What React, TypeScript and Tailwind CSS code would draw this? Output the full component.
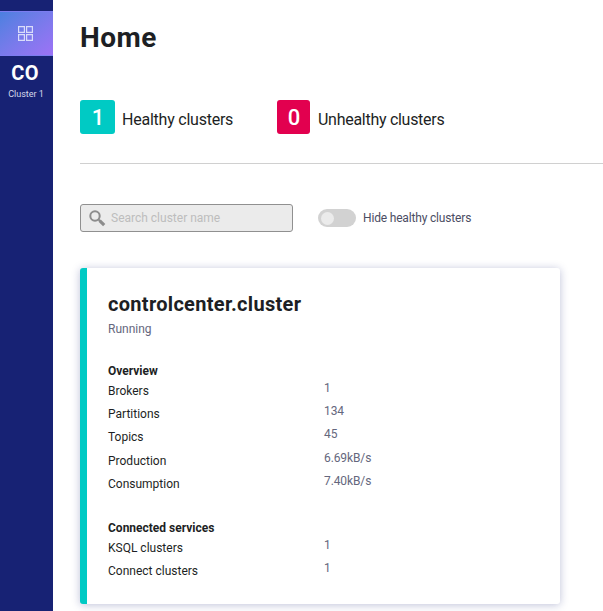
type Metric = { label: string; value: string };

const overview: Metric[] = [
  { label: "Brokers", value: "1" },
  { label: "Partitions", value: "134" },
  { label: "Topics", value: "45" },
  { label: "Production", value: "6.69kB/s" },
  { label: "Consumption", value: "7.40kB/s" },
];

const services: Metric[] = [
  { label: "KSQL clusters", value: "1" },
  { label: "Connect clusters", value: "1" },
];

function Sidebar() {
  return (
    <nav className="flex w-[53px] shrink-0 flex-col items-center bg-[#172274] pt-[11px]">
      <a className="flex h-[45px] w-full items-center justify-center border-y border-[#7b7cf0] bg-linear-to-br from-[#4a80e0] to-[#9c72f6] pr-[2px]">
        <svg width="15" height="15" viewBox="0 0 15 15" fill="none" stroke="#d9dcfa" strokeWidth="1.2" className="-mt-px">
          <path d="M.6.6h5.8v5.8H.6zM8.6 .6h5.8v5.8H8.6zM.6 8.6h5.8v5.8H.6zM8.6 8.6h5.8v5.8H8.6z" />
        </svg>
      </a>
      <span className="mt-[5px] pr-[3px] text-[20px] leading-6 font-bold tracking-[0.2px] text-white">CO</span>
      <span className="mt-[3px] pr-px text-[9px] leading-3 whitespace-nowrap text-[#d5d8ea]">Cluster 1</span>
    </nav>
  );
}

function MetricRows({ title, rows }: { title: string; rows: Metric[] }) {
  return (
    <section>
      <h3 className="h-[17.75px] text-[12px] leading-[18px] font-bold">{title}</h3>
      {rows.map((row) => (
        <div key={row.label} className="flex h-[23.25px] items-start text-[12px] leading-[22px]">
          <span className="w-[216px]">{row.label}</span>
          <span className="-mt-[3px] tracking-[-0.1px] text-[#65677d]">{row.value}</span>
        </div>
      ))}
    </section>
  );
}

export default function App() {
  return (
    <div className="flex h-[611px] w-[603px] overflow-hidden bg-white font-['Roboto',sans-serif] text-[#1d1f24]">
      <Sidebar />
      <main className="flex-1 pl-[27px]">
        <h1 className="pt-[21px] text-[28px] leading-[34px] font-bold tracking-[0.5px]">Home</h1>
        <div className="mt-[45px] flex h-[64px] items-start border-b border-[#d0d0d0]">
          <div className="flex w-[197px] items-center">
            <span className="flex h-[34px] w-[35px] items-center justify-center rounded-[3px] bg-[#00cac4] pl-px text-[22px] font-medium text-white">1</span>
            <span className="mt-[5px] ml-[7px] text-[16px] leading-5 tracking-[-0.23px]">Healthy clusters</span>
          </div>
          <div className="flex items-center">
            <span className="flex h-[34px] w-[33px] items-center justify-center rounded-[3px] bg-[#e2004f] pl-px text-[22px] font-medium text-white">0</span>
            <span className="mt-[5px] ml-[8px] text-[16px] leading-5 tracking-[-0.28px]">Unhealthy clusters</span>
          </div>
        </div>
        <div className="mt-10 flex h-7 items-center">
          <label className="flex h-7 w-[213px] items-center rounded-[3px] border border-[#909090] bg-[#ebebeb] pl-2">
            <svg width="17" height="17" viewBox="0 0 17 17" fill="none" stroke="#8c8c8c">
              <circle cx="6" cy="6" r="4.7" strokeWidth="2" />
              <path d="M9.4 9.4l2 2" strokeWidth="2" />
              <path d="M10.6 10.6l4.6 4.6" strokeWidth="3.2" />
            </svg>
            <span className="ml-[5px] text-[12px] text-[#bdbdbd]">Search cluster name</span>
          </label>
          <span className="ml-[25px] flex h-[18px] w-[38px] items-center rounded-full bg-[#d2d2d2] pl-[3px]">
            <span className="size-[13px] rounded-full bg-[#ebebeb]" />
          </span>
          <span className="ml-[7px] text-[12px] tracking-[-0.17px] text-[#4b4d63]">Hide healthy clusters</span>
        </div>
        <article className="mt-9 h-[336px] w-[480px] rounded-[3px] border-l-[7px] border-[#00cac4] bg-white pl-[21px] shadow-[0_1px_8px_rgba(23,34,116,0.28)]">
          <h2 className="pt-[24px] text-[20px] leading-6 font-bold tracking-[0.3px]">controlcenter.cluster</h2>
          <p className="mt-[5px] text-[12px] leading-4 text-[#65677d]">Running</p>
          <div className="mt-[25px] flex flex-col gap-[23px]">
            <MetricRows title="Overview" rows={overview} />
            <MetricRows title="Connected services" rows={services} />
          </div>
        </article>
      </main>
    </div>
  );
}
